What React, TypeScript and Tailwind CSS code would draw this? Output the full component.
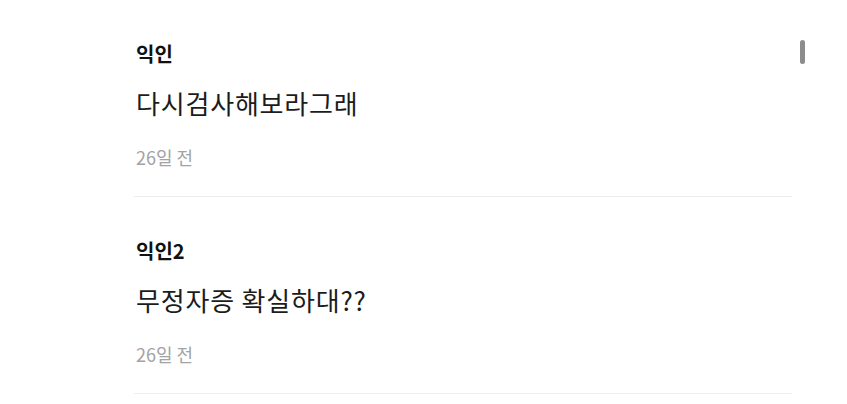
type CommentProps = {
  name: string;
  text: string;
  date: string;
};

const comments: CommentProps[] = [
  { name: "익인", text: "다시검사해보라그래", date: "26일 전" },
  { name: "익인2", text: "무정자증 확실하대??", date: "26일 전" },
];

function CommentItem({ name, text, date }: CommentProps) {
  return (
    <div className="border-b border-[#ededed] pt-[41px] pb-[27px]">
      {/* 작성자 */}
      <div className="pl-[2px] text-[20px] leading-[26px] font-bold text-[#111]">{name}</div>
      {/* 내용 */}
      <p className="pl-[2px] mt-[20px] text-[26px] leading-[32px] tracking-[0.8px] text-[#1c1c1c]">{text}</p>
      {/* 시간 */}
      <div className="pl-[2px] mt-[26px] text-[18px] leading-[24px] text-[#a3a3a3]">{date}</div>
    </div>
  );
}

export default function App() {
  return (
    <div
      className="relative w-[847px] h-[404px] overflow-hidden bg-white"
      style={{ fontFamily: '"Noto Sans CJK KR", "Noto Sans", sans-serif' }}
    >
      <div className="ml-[134px] w-[658px]">
        {comments.map((c, i) => (
          <CommentItem key={i} {...c} />
        ))}
      </div>

      {/* 스크롤바 */}
      <div className="absolute left-[800px] top-[40px] w-[5px] h-[24px] rounded-full bg-[#8c8c8c]" />
    </div>
  );
}
